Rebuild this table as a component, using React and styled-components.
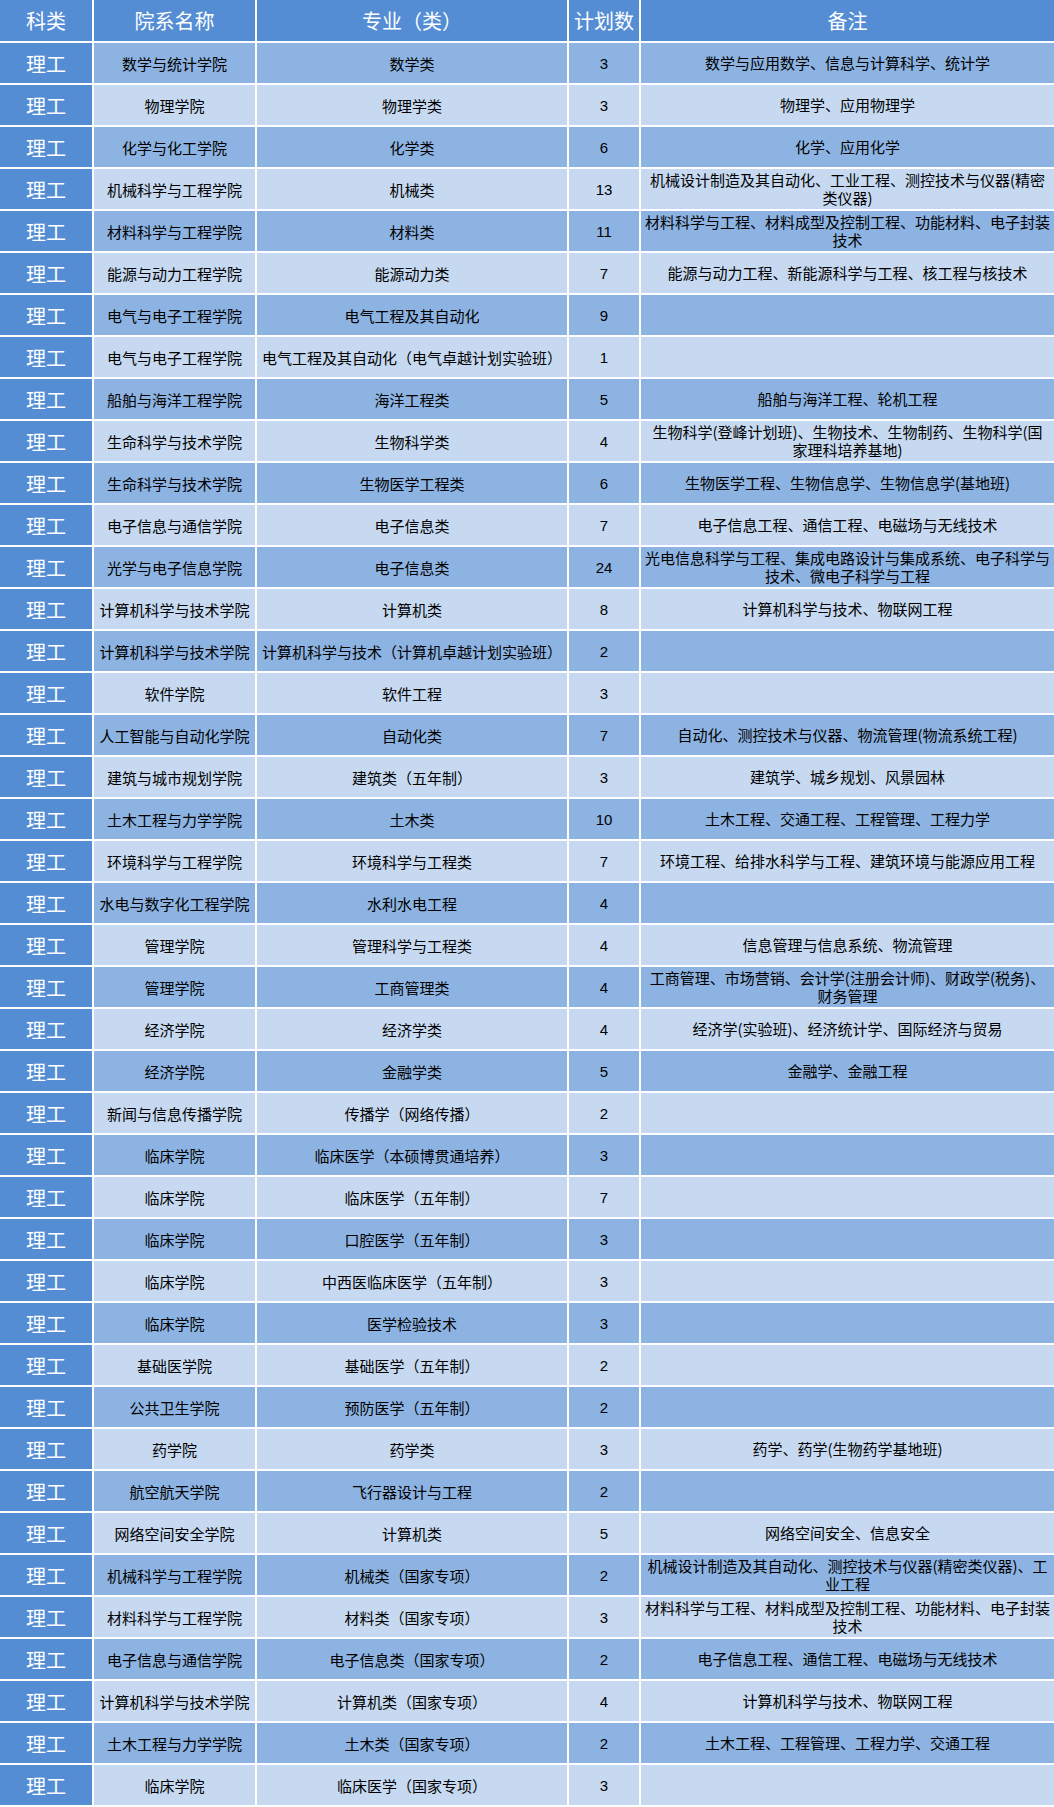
import React from 'react'
import styled, { createGlobalStyle } from 'styled-components'

const rows = [
  ['数学与统计学院', '数学类', '3', ['数学与应用数学、信息与计算科学、统计学']],
  ['物理学院', '物理学类', '3', ['物理学、应用物理学']],
  ['化学与化工学院', '化学类', '6', ['化学、应用化学']],
  ['机械科学与工程学院', '机械类', '13', ['机械设计制造及其自动化、工业工程、测控技术与仪器(精密', '类仪器)']],
  ['材料科学与工程学院', '材料类', '11', ['材料科学与工程、材料成型及控制工程、功能材料、电子封装', '技术']],
  ['能源与动力工程学院', '能源动力类', '7', ['能源与动力工程、新能源科学与工程、核工程与核技术']],
  ['电气与电子工程学院', '电气工程及其自动化', '9', []],
  ['电气与电子工程学院', '电气工程及其自动化（电气卓越计划实验班）', '1', []],
  ['船舶与海洋工程学院', '海洋工程类', '5', ['船舶与海洋工程、轮机工程']],
  ['生命科学与技术学院', '生物科学类', '4', ['生物科学(登峰计划班)、生物技术、生物制药、生物科学(国', '家理科培养基地)']],
  ['生命科学与技术学院', '生物医学工程类', '6', ['生物医学工程、生物信息学、生物信息学(基地班)']],
  ['电子信息与通信学院', '电子信息类', '7', ['电子信息工程、通信工程、电磁场与无线技术']],
  ['光学与电子信息学院', '电子信息类', '24', ['光电信息科学与工程、集成电路设计与集成系统、电子科学与', '技术、微电子科学与工程']],
  ['计算机科学与技术学院', '计算机类', '8', ['计算机科学与技术、物联网工程']],
  ['计算机科学与技术学院', '计算机科学与技术（计算机卓越计划实验班）', '2', []],
  ['软件学院', '软件工程', '3', []],
  ['人工智能与自动化学院', '自动化类', '7', ['自动化、测控技术与仪器、物流管理(物流系统工程)']],
  ['建筑与城市规划学院', '建筑类（五年制）', '3', ['建筑学、城乡规划、风景园林']],
  ['土木工程与力学学院', '土木类', '10', ['土木工程、交通工程、工程管理、工程力学']],
  ['环境科学与工程学院', '环境科学与工程类', '7', ['环境工程、给排水科学与工程、建筑环境与能源应用工程']],
  ['水电与数字化工程学院', '水利水电工程', '4', []],
  ['管理学院', '管理科学与工程类', '4', ['信息管理与信息系统、物流管理']],
  ['管理学院', '工商管理类', '4', ['工商管理、市场营销、会计学(注册会计师)、财政学(税务)、', '财务管理']],
  ['经济学院', '经济学类', '4', ['经济学(实验班)、经济统计学、国际经济与贸易']],
  ['经济学院', '金融学类', '5', ['金融学、金融工程']],
  ['新闻与信息传播学院', '传播学（网络传播）', '2', []],
  ['临床学院', '临床医学（本硕博贯通培养）', '3', []],
  ['临床学院', '临床医学（五年制）', '7', []],
  ['临床学院', '口腔医学（五年制）', '3', []],
  ['临床学院', '中西医临床医学（五年制）', '3', []],
  ['临床学院', '医学检验技术', '3', []],
  ['基础医学院', '基础医学（五年制）', '2', []],
  ['公共卫生学院', '预防医学（五年制）', '2', []],
  ['药学院', '药学类', '3', ['药学、药学(生物药学基地班)']],
  ['航空航天学院', '飞行器设计与工程', '2', []],
  ['网络空间安全学院', '计算机类', '5', ['网络空间安全、信息安全']],
  ['机械科学与工程学院', '机械类（国家专项）', '2', ['机械设计制造及其自动化、测控技术与仪器(精密类仪器)、工', '业工程']],
  ['材料科学与工程学院', '材料类（国家专项）', '3', ['材料科学与工程、材料成型及控制工程、功能材料、电子封装', '技术']],
  ['电子信息与通信学院', '电子信息类（国家专项）', '2', ['电子信息工程、通信工程、电磁场与无线技术']],
  ['计算机科学与技术学院', '计算机类（国家专项）', '4', ['计算机科学与技术、物联网工程']],
  ['土木工程与力学学院', '土木类（国家专项）', '2', ['土木工程、工程管理、工程力学、交通工程']],
  ['临床学院', '临床医学（国家专项）', '3', []],
]

const headers = ['科类', '院系名称', '专业（类）', '计划数', '备注']

function App() {
  return (
    <>
      <GlobalStyle />
      <Table>
        <Row $head>
          {headers.map(h => <HeadCell key={h}>{h}</HeadCell>)}
        </Row>
        {rows.map(([college, major, count, notes], i) => (
          <Row key={i}>
            <HeadCell>理工</HeadCell>
            <Cell $dark={i % 2 === 0}>{college}</Cell>
            <Cell $dark={i % 2 === 0}>{major}</Cell>
            <Cell $dark={i % 2 === 0} $num>{count}</Cell>
            <Cell $dark={i % 2 === 0}>
              <Note>
                {notes.map((line, j) => <Line key={j}>{line}</Line>)}
              </Note>
            </Cell>
          </Row>
        ))}
      </Table>
    </>
  )
}

export default App

const GlobalStyle = createGlobalStyle`
    body {
        margin: 0;
        background: #ffffff;
        font-family: "Noto Sans CJK SC", "Noto Sans", sans-serif;
    }
`

const Table = styled.div`
    width: 1054px;
    display: flex;
    flex-direction: column;
    gap: 2px;
    background: #ffffff;
`

const Row = styled.div`
    display: grid;
    grid-template-columns: 92px 161px 310px 70px 413px;
    column-gap: 2px;
    height: ${p => p.$head ? '41px' : '40px'};
`

const HeadCell = styled.div`
    display: flex;
    align-items: center;
    justify-content: center;
    background: #548dd4;
    color: #ffffff;
    font-size: 20px;
    white-space: nowrap;
`

const Cell = styled.div`
    display: flex;
    align-items: center;
    justify-content: center;
    background: ${p => p.$dark ? '#8db3e2' : '#c6d9f1'};
    color: #000000;
    font-size: 15px;
    font-family: ${p => p.$num ? '"Liberation Sans", sans-serif' : '"Noto Sans CJK SC", sans-serif'};
    white-space: nowrap;
    overflow: hidden;
`

const Note = styled.div`
    display: flex;
    flex-direction: column;
    align-items: center;
    line-height: 18px;
`

const Line = styled.span`
    display: block;
`
